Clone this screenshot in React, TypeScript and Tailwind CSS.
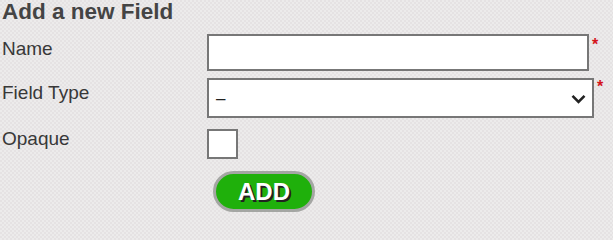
import React from "react";

export default function App() {
  return (
    <div
      className="min-h-screen w-full bg-[#e9e7e8] bg-[repeating-conic-gradient(#ecebeb_0_25%,#e5e2e3_0_50%)] bg-[length:4px_4px] text-[#383838]"
      style={{ fontFamily: '"Liberation Sans", Arial, sans-serif' }}
    >
      <div className="pl-[2px]">
        <h1 className="text-[22.5px] leading-[24px] font-bold text-[#444]">Add a new Field</h1>
      </div>
      <div className="mt-[10px] flex items-start">
        <label className="w-[207px] pl-[2px] mt-[4px] text-[19px] leading-[22px]">Name</label>
        <div className="h-[37px] w-[382px] border-2 border-[#777] bg-white" />
        <span className="ml-[3px] mt-[3px] text-[16px] leading-none font-bold text-[#d4141c]">*</span>
      </div>
      <div className="mt-[7px] flex items-start">
        <label className="w-[207px] pl-[2px] mt-[4px] text-[19px] leading-[22px]">Field Type</label>
        <div className="flex h-[40px] w-[387px] items-center justify-between border-2 border-[#777] bg-white pl-[7px] pr-[6px]">
          <span className="text-[17px] leading-none text-[#222]">–</span>
          <svg width="15" height="10" viewBox="0 0 15 10" className="mt-[1px]">
            <path d="M1.5 1.8 L7.5 7.8 L13.5 1.8" fill="none" stroke="#222" strokeWidth="2.6" />
          </svg>
        </div>
        <span className="ml-[3px] mt-[1px] text-[16px] leading-none font-bold text-[#d4141c]">*</span>
      </div>
      <div className="mt-[11px] flex items-start">
        <label className="w-[207px] pl-[2px] mt-[-1px] text-[19px] leading-[22px]">Opaque</label>
        <div className="h-[30px] w-[31px] border-2 border-[#777] bg-white" />
      </div>
      <div className="mt-[12px] pl-[213px]">
        <button className="flex h-[41px] w-[102px] items-center justify-center rounded-full border-[3px] border-[#a4a6a3] bg-[#1fb00b] text-[24px] leading-none font-bold text-white [text-shadow:2px_2px_0_#222]">
          ADD
        </button>
      </div>
    </div>
  );
}
